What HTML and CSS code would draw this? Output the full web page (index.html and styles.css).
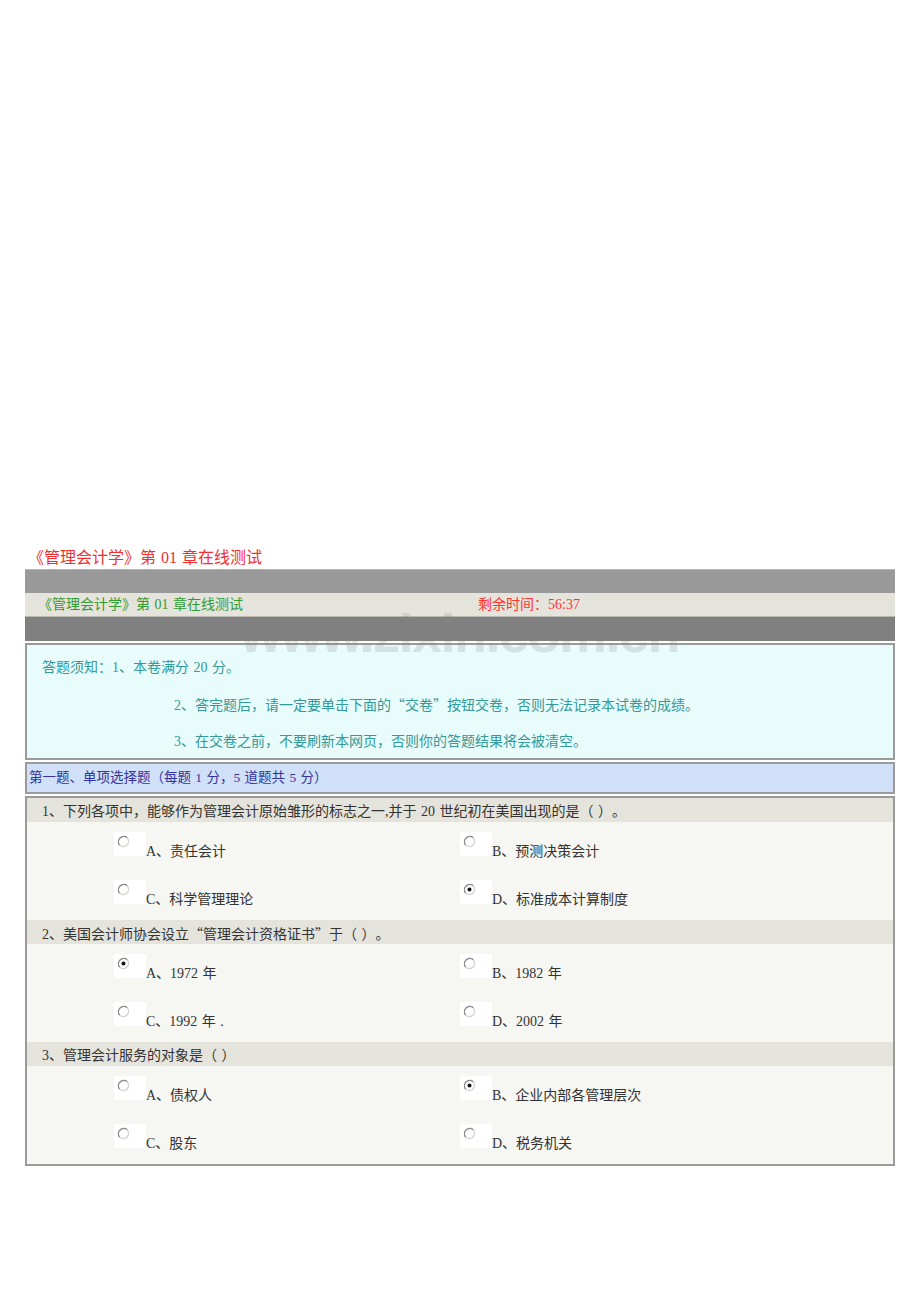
FILE: index.html
```html
<!DOCTYPE html>
<html lang="zh-CN">
<head>
<meta charset="utf-8">
<title>《管理会计学》第01章在线测试</title>
<link rel="stylesheet" href="styles.css">
</head>
<body>
<div class="page">
  <div class="doc-title">《管理会计学》第 01 章在线测试</div>

  <div class="exam-head">
    <div class="bar bar-top"></div>
    <div class="bar bar-info">
      <span class="exam-name">《管理会计学》第 01 章在线测试</span>
      <span class="timer">剩余时间：56:37</span>
    </div>
    <div class="bar bar-dark"></div>
  </div>

  <div class="notice">
    <div class="notice-line">答题须知：1、本卷满分 20 分。</div>
    <div class="notice-line indent">2、答完题后，请一定要单击下面的<span class="cq">“</span>交卷<span class="cq">”</span>按钮交卷，否则无法记录本试卷的成绩。</div>
    <div class="notice-line indent">3、在交卷之前，不要刷新本网页，否则你的答题结果将会被清空。</div>
  </div>

  <div class="section">第一题、单项选择题（每题 1 分，5 道题共 5 分）</div>

  <div class="qbox">
    <div class="q">
      <div class="q-head">1、下列各项中，能够作为管理会计原始雏形的标志之一,并于 20 世纪初在美国出现的是（ ）。</div>
      <div class="q-opts">
        <div class="opt"><span class="radio"><svg viewBox="0 0 13 13"><circle cx="6.5" cy="6.5" r="5.4" fill="#fff"/><path d="M10.3 2.7A5.4 5.4 0 0 0 2.7 10.3" class="ring-dark"/><path d="M2.7 10.3A5.4 5.4 0 0 0 10.3 2.7" class="ring-light"/></svg></span><span class="opt-text">A、责任会计</span></div>
        <div class="opt"><span class="radio"><svg viewBox="0 0 13 13"><circle cx="6.5" cy="6.5" r="5.4" fill="#fff"/><path d="M10.3 2.7A5.4 5.4 0 0 0 2.7 10.3" class="ring-dark"/><path d="M2.7 10.3A5.4 5.4 0 0 0 10.3 2.7" class="ring-light"/></svg></span><span class="opt-text">B、预测决策会计</span></div>
        <div class="opt"><span class="radio"><svg viewBox="0 0 13 13"><circle cx="6.5" cy="6.5" r="5.4" fill="#fff"/><path d="M10.3 2.7A5.4 5.4 0 0 0 2.7 10.3" class="ring-dark"/><path d="M2.7 10.3A5.4 5.4 0 0 0 10.3 2.7" class="ring-light"/></svg></span><span class="opt-text">C、科学管理理论</span></div>
        <div class="opt"><span class="radio"><svg viewBox="0 0 13 13"><circle cx="6.5" cy="6.5" r="5.4" fill="#fff"/><path d="M10.3 2.7A5.4 5.4 0 0 0 2.7 10.3" class="ring-dark"/><path d="M2.7 10.3A5.4 5.4 0 0 0 10.3 2.7" class="ring-light"/><circle cx="6.5" cy="6.5" r="2" fill="#111"/></svg></span><span class="opt-text">D、标准成本计算制度</span></div>
      </div>
    </div>
    <div class="q">
      <div class="q-head">2、美国会计师协会设立<span class="cq">“</span>管理会计资格证书<span class="cq">”</span>于（ ）。</div>
      <div class="q-opts">
        <div class="opt"><span class="radio"><svg viewBox="0 0 13 13"><circle cx="6.5" cy="6.5" r="5.4" fill="#fff"/><path d="M10.3 2.7A5.4 5.4 0 0 0 2.7 10.3" class="ring-dark"/><path d="M2.7 10.3A5.4 5.4 0 0 0 10.3 2.7" class="ring-light"/><circle cx="6.5" cy="6.5" r="2" fill="#111"/></svg></span><span class="opt-text">A、1972 年</span></div>
        <div class="opt"><span class="radio"><svg viewBox="0 0 13 13"><circle cx="6.5" cy="6.5" r="5.4" fill="#fff"/><path d="M10.3 2.7A5.4 5.4 0 0 0 2.7 10.3" class="ring-dark"/><path d="M2.7 10.3A5.4 5.4 0 0 0 10.3 2.7" class="ring-light"/></svg></span><span class="opt-text">B、1982 年</span></div>
        <div class="opt"><span class="radio"><svg viewBox="0 0 13 13"><circle cx="6.5" cy="6.5" r="5.4" fill="#fff"/><path d="M10.3 2.7A5.4 5.4 0 0 0 2.7 10.3" class="ring-dark"/><path d="M2.7 10.3A5.4 5.4 0 0 0 10.3 2.7" class="ring-light"/></svg></span><span class="opt-text">C、1992 年 .</span></div>
        <div class="opt"><span class="radio"><svg viewBox="0 0 13 13"><circle cx="6.5" cy="6.5" r="5.4" fill="#fff"/><path d="M10.3 2.7A5.4 5.4 0 0 0 2.7 10.3" class="ring-dark"/><path d="M2.7 10.3A5.4 5.4 0 0 0 10.3 2.7" class="ring-light"/></svg></span><span class="opt-text">D、2002 年</span></div>
      </div>
    </div>
    <div class="q">
      <div class="q-head">3、管理会计服务的对象是（ ）</div>
      <div class="q-opts">
        <div class="opt"><span class="radio"><svg viewBox="0 0 13 13"><circle cx="6.5" cy="6.5" r="5.4" fill="#fff"/><path d="M10.3 2.7A5.4 5.4 0 0 0 2.7 10.3" class="ring-dark"/><path d="M2.7 10.3A5.4 5.4 0 0 0 10.3 2.7" class="ring-light"/></svg></span><span class="opt-text">A、债权人</span></div>
        <div class="opt"><span class="radio"><svg viewBox="0 0 13 13"><circle cx="6.5" cy="6.5" r="5.4" fill="#fff"/><path d="M10.3 2.7A5.4 5.4 0 0 0 2.7 10.3" class="ring-dark"/><path d="M2.7 10.3A5.4 5.4 0 0 0 10.3 2.7" class="ring-light"/><circle cx="6.5" cy="6.5" r="2" fill="#111"/></svg></span><span class="opt-text">B、企业内部各管理层次</span></div>
        <div class="opt"><span class="radio"><svg viewBox="0 0 13 13"><circle cx="6.5" cy="6.5" r="5.4" fill="#fff"/><path d="M10.3 2.7A5.4 5.4 0 0 0 2.7 10.3" class="ring-dark"/><path d="M2.7 10.3A5.4 5.4 0 0 0 10.3 2.7" class="ring-light"/></svg></span><span class="opt-text">C、股东</span></div>
        <div class="opt"><span class="radio"><svg viewBox="0 0 13 13"><circle cx="6.5" cy="6.5" r="5.4" fill="#fff"/><path d="M10.3 2.7A5.4 5.4 0 0 0 2.7 10.3" class="ring-dark"/><path d="M2.7 10.3A5.4 5.4 0 0 0 10.3 2.7" class="ring-light"/></svg></span><span class="opt-text">D、税务机关</span></div>
      </div>
    </div>
  </div>

  <div class="watermark">www.zixin.com.cn</div>
</div>
</body>
</html>
```

FILE: styles.css
```css
html, body {
  margin: 0;
  padding: 0;
  background: #ffffff;
}

body {
  font-family: "Liberation Serif", "Noto Sans CJK SC", serif;
  font-size: 14px;
  color: #333333;
  text-spacing-trim: space-all;
  word-spacing: 1px;
}

.page {
  position: relative;
  width: 870px;
  padding: 548px 25px 0;
}

.cq {
  font-family: "Noto Sans CJK SC", sans-serif;
}

.doc-title {
  font-size: 16px;
  line-height: 20px;
  height: 20px;
  padding-left: 3px;
  margin-bottom: 1px;
  color: #f03030;
}

.exam-head {
  display: flex;
  flex-direction: column;
}

.bar {
  height: 24px;
}

.bar-top {
  background: #999999;
  border-top: 1px solid #b4b4b4;
  height: 23px;
}

.bar-info {
  background: #e5e4dc;
  display: grid;
  grid-template-columns: 453px 1fr;
  align-items: center;
  border-bottom: 1px solid #b8b8b0;
  height: 23px;
}

.exam-name {
  padding-left: 13px;
  font-size: 14px;
  line-height: 23px;
  color: #339933;
}

.timer {
  font-size: 14px;
  line-height: 23px;
  color: #ff3333;
}

.bar-dark {
  background: #808080;
  position: relative;
  z-index: 2;
}

.notice {
  margin-top: 2px;
  border: 2px solid #9a9a9a;
  background: #e8fcfc;
  padding: 13px 0 7px 15px;
  display: flex;
  flex-direction: column;
  gap: 18px;
  color: #339999;
}

.notice-line {
  line-height: 19px;
  height: 19px;
  white-space: nowrap;
}

.notice-line.indent {
  padding-left: 132px;
}

.section {
  margin-top: 2px;
  border: 2px solid #9a9a9a;
  background: #d0e0f9;
  height: 28px;
  line-height: 28px;
  padding-left: 2px;
  font-size: 13.5px;
  color: #333399;
}

.qbox {
  margin-top: 2px;
  border: 2px solid #9a9a9a;
  background: #f6f6f2;
}

.q-head {
  background: #e5e4dc;
  height: 24px;
  line-height: 27px;
  padding-left: 15px;
  white-space: nowrap;
}

.q-opts {
  display: grid;
  grid-template-columns: 346px 1fr;
  row-gap: 24px;
  padding: 10px 0 16px 87px;
}

.opt {
  display: flex;
  align-items: baseline;
  height: 24px;
}

.radio {
  display: inline-block;
  width: 32px;
  height: 24px;
  background: #ffffff;
  position: relative;
  flex: none;
}

.radio svg {
  position: absolute;
  left: 3px;
  top: 3px;
  width: 13px;
  height: 13px;
}

.ring-dark {
  fill: none;
  stroke: #8c8c8c;
  stroke-width: 1.4;
}

.ring-light {
  fill: none;
  stroke: #d4d4cc;
  stroke-width: 1.4;
}

.opt-text {
  line-height: 14px;
  white-space: nowrap;
}

.watermark {
  position: absolute;
  left: 240px;
  top: 606px;
  z-index: 1;
  font-family: "Liberation Sans", sans-serif;
  font-weight: bold;
  font-size: 54px;
  line-height: 54px;
  letter-spacing: -1.5px;
  word-spacing: 0;
  color: rgba(130, 130, 130, 0.2);
  pointer-events: none;
  white-space: nowrap;
}
```
